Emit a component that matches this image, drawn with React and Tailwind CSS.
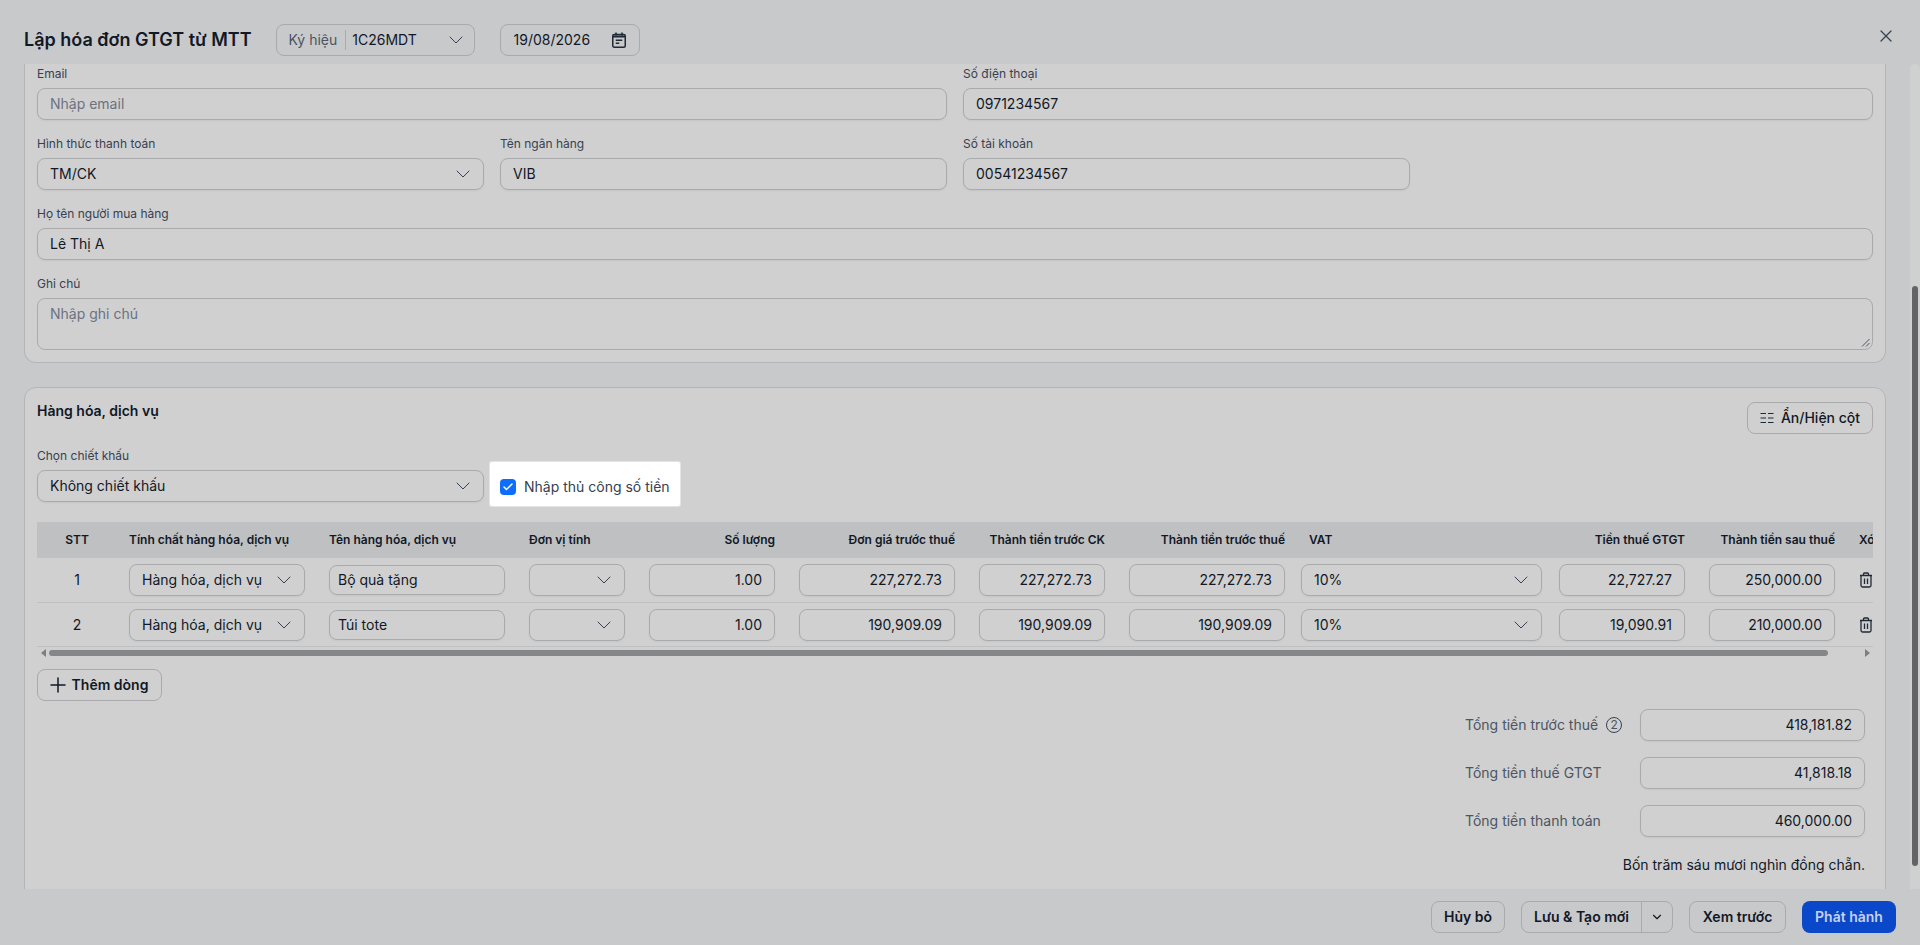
import { ChevronDown, X, Plus, Check } from 'lucide-react';
import { twMerge } from 'tailwind-merge';

const inputBase = 'h-8 rounded-lg border border-[#a9aaac] px-3 flex items-center text-sm text-[#111827] shadow-[0_1px_2px_rgba(0,0,0,0.05)]';

const Label = ({ children }) => (
  <div className="h-5 mb-1 text-xs leading-5 text-[#374151]">{children}</div>
);

const Input = ({ value, placeholder, className = '' }) => (
  <div className={twMerge(inputBase, placeholder && 'text-[#6b7280]', className)}>{value || placeholder}</div>
);

const Select = ({ value, className = '' }) => (
  <div className={twMerge(inputBase, 'justify-between', className)}>
    <span>{value}</span>
    <ChevronDown size={24} strokeWidth={1} className="text-[#374151] -mr-1" />
  </div>
);

const Btn = ({ children, className = '' }) => (
  <div className={twMerge('h-8 rounded-lg border border-[#a9aaac] flex items-center justify-center text-sm font-semibold text-[#111827]', className)}>
    {children}
  </div>
);

const CalendarIcon = () => (
  <svg width="16" height="16" viewBox="0 0 16 16" fill="none" stroke="#1f2937" strokeWidth="1.5">
    <rect x="1.75" y="2.5" width="12.5" height="12.75" rx="1.5" />
    <path d="M2 4.5h12" strokeWidth="2" />
    <path d="M5 0.5v3M11 0.5v3M4.75 8.25h6.5M4.75 11.25h3.5" />
  </svg>
);

const ColumnsIcon = () => (
  <svg width="14" height="14" viewBox="0 0 14 14" fill="none" stroke="#1f2937" strokeWidth="1">
    <path d="M0.5 2.5h5.5M0.5 7h5.5M0.5 11.5h5.5M8 2.5h5.5M8 7h5.5M8 11.5h5.5" />
  </svg>
);

const TrashIcon = () => (
  <svg width="16" height="16" viewBox="0 0 16 16" fill="none" stroke="#1f2937" strokeWidth="1.3">
    <path d="M5.5 3V2a1 1 0 0 1 1-1h3a1 1 0 0 1 1 1v1M2 3.5h12M3 3.5v10A1.5 1.5 0 0 0 4.5 15h7a1.5 1.5 0 0 0 1.5-1.5v-10M6.5 6.5v5.5M9.5 6.5v5.5" />
  </svg>
);

const rows = [
  { stt: 1, name: 'Bộ quà tặng', qty: '1.00', price: '227,272.73', ck: '227,272.73', pre: '227,272.73', tax: '22,727.27', post: '250,000.00' },
  { stt: 2, name: 'Túi tote', qty: '1.00', price: '190,909.09', ck: '190,909.09', pre: '190,909.09', tax: '19,090.91', post: '210,000.00' },
];

const th = 'px-3 text-xs font-semibold text-[#111827] whitespace-nowrap';
const td = 'px-3 pt-px align-middle';

const Totals = ({ label, value, icon }) => (
  <div className="flex items-center h-8">
    <div className="w-[175px] flex items-center gap-2 text-sm text-[#4b5563]">
      {label}
      {icon && (
        <span className="w-4 h-4 rounded-full border border-[#374151] text-xs leading-none flex items-center justify-center">2</span>
      )}
    </div>
    <Input value={value} className="w-[225px] justify-end" />
  </div>
);

export default function App() {
  return (
    <div className="h-[945px] flex flex-col bg-[#c8c9cb] overflow-hidden font-['Inter',sans-serif]">
      {/* Header */}
      <div className="h-16 shrink-0 flex items-start pt-6 pl-6 pr-6">
        <h1 className="text-lg font-semibold leading-8 text-[#111827] whitespace-nowrap">Lập hóa đơn GTGT từ MTT</h1>
        <div className="ml-6 w-[199px] h-8 rounded-lg border border-[#a9aaac] flex items-center pl-3 pr-[6px] text-sm">
          <span className="text-[#4b5563] pr-2 border-r border-[#a9aaac] leading-5">Ký hiệu</span>
          <span className="pl-1.5 flex-1 text-[#111827]">1C26MDT</span>
          <ChevronDown size={24} strokeWidth={1} className="text-[#374151]" />
        </div>
        <div className="ml-[25px] w-[140px] h-8 rounded-lg border border-[#a9aaac] flex items-center justify-between pl-[13px] pr-3 text-sm text-[#111827]">
          19/08/2026
          <CalendarIcon />
        </div>
        <X size={20} strokeWidth={1.5} className="ml-auto mt-[2px] text-[#374151]" />
      </div>

      {/* Body */}
      <div className="flex-1 min-h-0 flex overflow-hidden">
        <div className="flex-1 min-w-0 pl-6 pr-6 flex flex-col gap-6">
          <div className="shrink-0 h-[299px] bg-[#d0d0d0] border border-t-0 border-[#b4b5b7] rounded-b-xl px-3 grid grid-cols-[447px_447px_1fr] gap-x-4 content-start">
            <div className="col-span-2">
              <Label>Email</Label>
              <Input placeholder="Nhập email" />
            </div>
            <div>
              <Label>Số điện thoại</Label>
              <Input value="0971234567" />
            </div>
            <div className="mt-[14px]">
              <Label>Hình thức thanh toán</Label>
              <Select value="TM/CK" />
            </div>
            <div className="mt-[14px]">
              <Label>Tên ngân hàng</Label>
              <Input value="VIB" />
            </div>
            <div className="mt-[14px]">
              <Label>Số tài khoản</Label>
              <Input value="00541234567" className="w-[447px]" />
            </div>
            <div className="col-span-3 mt-[14px]">
              <Label>Họ tên người mua hàng</Label>
              <Input value="Lê Thị A" />
            </div>
            <div className="col-span-3 mt-[14px]">
              <Label>Ghi chú</Label>
              <div className="relative h-[52px] rounded-lg border border-[#a9aaac] px-3 py-[5px] text-sm text-[#6b7280]">
                Nhập ghi chú
                {/* textarea resize grip */}
                <svg width="9" height="9" viewBox="0 0 9 9" stroke="#4b5563" strokeWidth="1" className="absolute right-[2px] bottom-[2px]">
                  <path d="M8.5 1L1 8.5M8.5 5L5 8.5" />
                </svg>
              </div>
            </div>
          </div>

          <div className="shrink-0 bg-[#d0d0d0] border border-[#b4b5b7] rounded-xl px-3 pt-[14px] h-[560px]">
            <div className="flex justify-between items-start">
              <h2 className="text-sm font-semibold text-[#111827] leading-4 mt-[1px]">Hàng hóa, dịch vụ</h2>
              <Btn className="w-[126px] gap-[7px] font-medium">
                <ColumnsIcon />
                Ẩn/Hiện cột
              </Btn>
            </div>

            <div className="mt-3 flex items-end">
              <div className="w-[447px]">
                <Label>Chọn chiết khấu</Label>
                <Select value="Không chiết khấu" />
              </div>
              <div className="relative z-10 ml-[6px] -mb-1 w-[190px] h-11 pt-[5px] bg-white ring-1 ring-[#e4e4e4] rounded-[2px] flex items-center pl-[10px] gap-2 text-sm text-[#374151]">
                <span className="w-4 h-4 rounded bg-[#0d6efd] flex items-center justify-center">
                  <Check size={12} strokeWidth={3} className="text-white" />
                </span>
                Nhập thủ công số tiền
              </div>
            </div>

            <div className="mt-5 overflow-hidden">
              <table className="table-fixed w-[1850px] border-collapse">
                <colgroup>
                  <col className="w-[80px]" />
                  <col className="w-[200px]" />
                  <col className="w-[200px]" />
                  <col className="w-[120px]" />
                  <col className="w-[150px]" />
                  <col className="w-[180px]" />
                  <col className="w-[150px]" />
                  <col className="w-[180px]" />
                  <col className="w-[250px]" />
                  <col className="w-[150px]" />
                  <col className="w-[150px]" />
                  <col className="w-[40px]" />
                </colgroup>
                <thead>
                  <tr className="h-9 bg-[#bfc0c2]">
                    <th className={`${th} text-center`}>STT</th>
                    <th className={`${th} text-left`}>Tính chất hàng hóa, dịch vụ</th>
                    <th className={`${th} text-left`}>Tên hàng hóa, dịch vụ</th>
                    <th className={`${th} text-left`}>Đơn vị tính</th>
                    <th className={`${th} text-right`}>Số lượng</th>
                    <th className={`${th} text-right`}>Đơn giá trước thuế</th>
                    <th className={`${th} text-right`}>Thành tiền trước CK</th>
                    <th className={`${th} text-right`}>Thành tiền trước thuế</th>
                    <th className={`${th} text-left`}>VAT</th>
                    <th className={`${th} text-right`}>Tiền thuế GTGT</th>
                    <th className={`${th} text-right`}>Thành tiền sau thuế</th>
                    <th className={`${th} text-left`}>Xóa</th>
                  </tr>
                </thead>
                <tbody>
                  {rows.map((r) => (
                    <tr key={r.stt} className="h-11 border-b border-[#bfc0c2]">
                      <td className={`${td} text-center text-sm text-[#111827]`}>{r.stt}</td>
                      <td className={td}><Select value="Hàng hóa, dịch vụ" /></td>
                      <td className={td}><Input value={r.name} className="h-[30px] px-2" /></td>
                      <td className={td}><Select value="" /></td>
                      <td className={td}><Input value={r.qty} className="justify-end" /></td>
                      <td className={td}><Input value={r.price} className="justify-end" /></td>
                      <td className={td}><Input value={r.ck} className="justify-end" /></td>
                      <td className={td}><Input value={r.pre} className="justify-end" /></td>
                      <td className="pl-1 pr-[5px] pt-px"><Select value="10%" /></td>
                      <td className={td}><Input value={r.tax} className="justify-end" /></td>
                      <td className={td}><Input value={r.post} className="justify-end" /></td>
                      <td className="pl-[11px] pt-px"><TrashIcon /></td>
                    </tr>
                  ))}
                </tbody>
              </table>
            </div>

            {/* Horizontal scrollbar */}
            <div className="mt-[3px] h-[6px] flex items-center pl-1 pr-[3px] gap-[3px]">
              <span className="border-y-4 border-y-transparent border-r-[5px] border-r-[#7d7e80]" />
              <div className="w-[1779px] h-[6px] rounded-full bg-[#858688]" />
              <span className="ml-auto border-y-4 border-y-transparent border-l-[5px] border-l-[#7d7e80]" />
            </div>

            <Btn className="mt-[13px] w-[125px] gap-[7px]">
              <Plus size={24} strokeWidth={1.5} className="-mx-[5px]" />
              Thêm dòng
            </Btn>

            <div className="mt-2 mr-2 flex flex-col items-end gap-4">
              <Totals label="Tổng tiền trước thuế" value="418,181.82" icon />
              <Totals label="Tổng tiền thuế GTGT" value="41,818.18" />
              <Totals label="Tổng tiền thanh toán" value="460,000.00" />
              <div className="text-sm text-[#111827] mt-[2px]">Bốn trăm sáu mươi nghìn đồng chẵn.</div>
            </div>
          </div>
        </div>

        {/* Vertical scrollbar */}
        <div className="w-[10px] shrink-0 bg-[#cfd0d0] rounded-t-lg">
          <div className="mt-[222px] mx-auto w-[6px] h-[580px] rounded-full bg-[#636466]" />
        </div>
      </div>

      {/* Footer */}
      <div className="h-14 shrink-0 pt-3 pr-6 flex justify-end gap-4">
        <Btn className="w-[74px]">Hủy bỏ</Btn>
        <div className="flex h-8 rounded-lg border border-[#a9aaac] text-sm font-semibold text-[#111827]">
          <div className="w-[120px] flex items-center justify-center border-r border-[#a9aaac]">Lưu & Tạo mới</div>
          <div className="w-[30px] flex items-center justify-center"><ChevronDown size={14} strokeWidth={2} /></div>
        </div>
        <Btn className="w-[97px]">Xem trước</Btn>
        <div className="w-[94px] h-8 rounded-lg bg-[#0a47c9] text-[#c5d2ec] text-sm font-semibold flex items-center justify-center">Phát hành</div>
      </div>
    </div>
  );
}
